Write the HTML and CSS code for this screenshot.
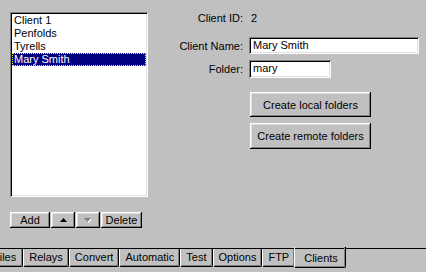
FILE: index.html
```html
<!DOCTYPE html>
<html lang="en">
<head>
    <meta charset="UTF-8">
    <title>Clients</title>
    <link rel="stylesheet" href="styles.css">
</head>
<body>
<div class="window">
    <div class="panel">
        <div class="left">
            <ul class="list">
                <li>Client 1</li>
                <li>Penfolds</li>
                <li>Tyrells</li>
                <li class="selected">Mary Smith</li>
            </ul>
            <div class="list-buttons">
                <button class="btn btn-add">Add</button>
                <button class="btn btn-arrow">
                    <svg width="7" height="4" viewBox="0 0 7 4"><path d="M3.5 0 L7 4 L0 4 Z" fill="#000"/></svg>
                </button>
                <button class="btn btn-arrow" disabled>
                    <svg width="8" height="5" viewBox="0 0 8 5"><path d="M1 1 L8 1 L4.5 5 Z" fill="#fff"/><path d="M0 0 L7 0 L3.5 4 Z" fill="#808080"/></svg>
                </button>
                <button class="btn btn-delete">Delete</button>
            </div>
        </div>
        <div class="form">
            <div class="row row-id">
                <span class="label">Client ID:</span>
                <span class="value">2</span>
            </div>
            <div class="row row-name">
                <span class="label">Client Name:</span>
                <div class="field field-name">Mary Smith</div>
            </div>
            <div class="row row-folder">
                <span class="label">Folder:</span>
                <div class="field field-folder">mary</div>
            </div>
            <button class="btn btn-wide">Create local folders</button>
            <button class="btn btn-wide btn-second">Create remote folders</button>
        </div>
    </div>
    <ul class="tabs">
        <li class="tab tab-first">Files</li>
        <li class="tab">Relays</li>
        <li class="tab">Convert</li>
        <li class="tab">Automatic</li>
        <li class="tab">Test</li>
        <li class="tab">Options</li>
        <li class="tab">FTP</li>
        <li class="tab selected">Clients</li>
    </ul>
</div>
</body>
</html>
```

FILE: styles.css
```css
*{
    margin: 0;
    padding: 0;
    box-sizing: border-box;
}
li{
    list-style: none;
}
body{
    background: #c0c0c0;
    font-family: "Liberation Sans", Arial, sans-serif;
    font-size: 11px;
    color: #000;
}
.window{
    width: 426px;
    height: 272px;
    overflow: hidden;
}
.panel{
    display: flex;
    height: 249px;
    border-bottom: 1px solid #000;
}

/* left column */
.left{
    width: 148px;
    padding: 12px 0 0 10px;
}
.list{
    width: 138px;
    height: 185px;
    padding: 2px;
    background: #fff;
    box-shadow: inset 1px 1px #808080, inset -1px -1px #fff, inset 2px 2px #000, inset -2px -2px #dfdfdf;
}
.list li{
    height: 13px;
    line-height: 13px;
    padding-left: 2px;
    white-space: nowrap;
}
.list li.selected{
    background: #000080;
    color: #fff;
    outline: 1px dotted #ffff00;
    outline-offset: -1px;
}
.list-buttons{
    display: flex;
    gap: 1px;
    margin-top: 15px;
    height: 16px;
}

/* buttons */
.btn{
    display: flex;
    align-items: center;
    justify-content: center;
    border: none;
    background: #c0c0c0;
    font-family: "Liberation Sans", Arial, sans-serif;
    font-size: 11px;
    color: #000;
    box-shadow: inset -1px -1px #000, inset 1px 1px #fff, inset -2px -2px #808080, inset 2px 2px #dfdfdf;
}
.btn-add{
    width: 40px;
}
.btn-arrow{
    width: 24px;
}
.btn-delete{
    width: 41px;
}
.btn-wide{
    width: 121px;
    height: 25px;
    margin: 14px 0 0 102px;
}
.btn-second{
    height: 26px;
    margin-top: 6px;
}

/* right form */
.form{
    display: flex;
    flex-direction: column;
    flex: 1;
}
.row{
    display: flex;
    align-items: center;
    gap: 6px;
}
.row .label{
    width: 95px;
    text-align: right;
}
.row-id{
    margin-top: 11px;
    height: 13px;
    gap: 8px;
}
.row-name{
    margin-top: 13px;
    height: 17px;
}
.row-folder{
    margin-top: 6px;
    height: 18px;
}
.field{
    height: 100%;
    padding: 2px 0 0 4px;
    background: #fff;
    box-shadow: inset 1px 1px #808080, inset -1px -1px #fff, inset 2px 2px #000, inset -2px -2px #dfdfdf;
    white-space: nowrap;
}
.field-name{
    width: 170px;
}
.field-folder{
    width: 82px;
}

/* tabs */
.tabs{
    display: flex;
    margin-left: -14px;
}
.tab{
    height: 18px;
    line-height: 16px;
    padding: 0 5px;
    border-left: 1px solid #fff;
    border-right: 1px solid #000;
    border-bottom: 1px solid #000;
    border-radius: 0 0 2px 2px;
    box-shadow: inset -1px -1px #808080;
    white-space: nowrap;
}
.tab-first{
    padding: 0 6px;
}
.tab.selected{
    position: relative;
    height: 21px;
    margin-top: -2px;
    padding: 3px 7px 0 9px;
    margin-left: -1px;
}
```
